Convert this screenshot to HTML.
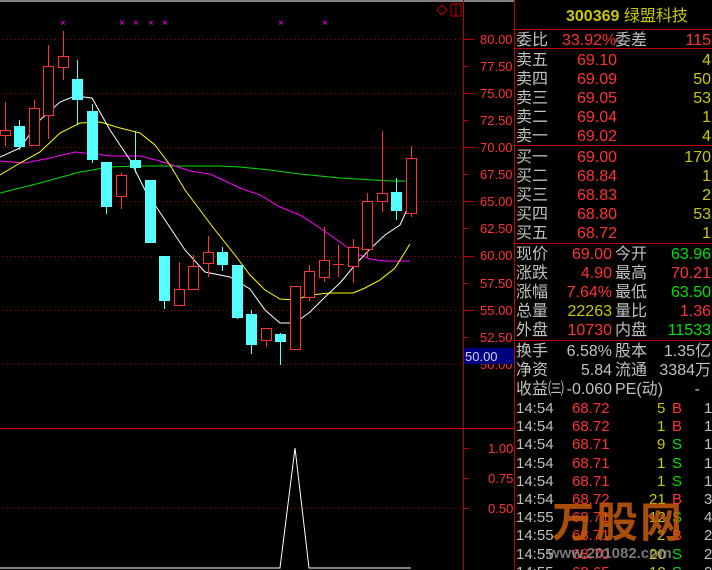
<!DOCTYPE html>
<html style="width:712px;height:570px;overflow:hidden"><head><meta charset="utf-8">
<style>
*{margin:0;padding:0;box-sizing:border-box}
html,body{width:712px;height:570px;overflow:hidden}
body{background:#000;position:relative;font-family:"Liberation Sans","Noto Sans CJK SC",sans-serif}
.t{position:absolute;white-space:nowrap;font-size:16px;line-height:19px}
.l{color:#c0c0c0;font-size:16px}
.r{color:#ff3232}.y{color:#c8c800}.g{color:#00e000}.w{color:#c0c0c0}
.hl{position:absolute;left:515px;width:197px;height:1px;background:#c00000}
</style></head><body>
<svg width="712" height="570" style="position:absolute;left:0;top:0" xmlns="http://www.w3.org/2000/svg">
<rect x="0" y="0" width="514" height="2" fill="#808080"/>
<g stroke="#a00000" stroke-dasharray="1,3" stroke-width="1">
<line x1="3" y1="39.5" x2="462" y2="39.5"/><line x1="3" y1="93.5" x2="462" y2="93.5"/>
<line x1="3" y1="147.5" x2="462" y2="147.5"/><line x1="3" y1="201.5" x2="462" y2="201.5"/>
<line x1="3" y1="256.5" x2="462" y2="256.5"/><line x1="3" y1="310.5" x2="462" y2="310.5"/>
<line x1="3" y1="364.5" x2="462" y2="364.5"/><line x1="3" y1="508.5" x2="462" y2="508.5"/>
</g>
<line x1="463.5" y1="0" x2="463.5" y2="570" stroke="#c00000"/>
<line x1="514.5" y1="0" x2="514.5" y2="570" stroke="#c00000"/>
<line x1="0" y1="428.5" x2="514" y2="428.5" stroke="#c00000" stroke-width="1.2"/>
<g stroke="#c00000">
<line x1="463" y1="39.5" x2="474" y2="39.5"/><line x1="463" y1="66.5" x2="468" y2="66.5"/>
<line x1="463" y1="93.5" x2="474" y2="93.5"/><line x1="463" y1="120.5" x2="468" y2="120.5"/>
<line x1="463" y1="147.5" x2="474" y2="147.5"/><line x1="463" y1="174.5" x2="468" y2="174.5"/>
<line x1="463" y1="201.5" x2="474" y2="201.5"/><line x1="463" y1="228.5" x2="468" y2="228.5"/>
<line x1="463" y1="256.5" x2="474" y2="256.5"/><line x1="463" y1="283.5" x2="468" y2="283.5"/>
<line x1="463" y1="310.5" x2="474" y2="310.5"/><line x1="463" y1="337.5" x2="468" y2="337.5"/>
<line x1="463" y1="448.5" x2="469" y2="448.5"/><line x1="463" y1="478.5" x2="469" y2="478.5"/>
<line x1="463" y1="508.5" x2="469" y2="508.5"/>
</g>
<g fill="#ff3232" font-family="Liberation Sans" font-size="13">
<text x="480" y="44">80.00</text><text x="480" y="71">77.50</text><text x="480" y="98">75.00</text>
<text x="480" y="125">72.50</text><text x="480" y="152">70.00</text><text x="480" y="179">67.50</text>
<text x="480" y="206">65.00</text><text x="480" y="233">62.50</text><text x="480" y="260">60.00</text>
<text x="480" y="288">57.50</text><text x="480" y="315">55.00</text><text x="480" y="342">52.50</text>
<text x="480" y="369">50.00</text>
<text x="488" y="453">1.00</text><text x="488" y="483">0.75</text><text x="488" y="513">0.50</text>
</g>
<rect x="464" y="348" width="50" height="16" fill="#000080"/>
<text x="465" y="361" fill="#d0d0ff" font-family="Liberation Sans" font-size="13">50.00</text>
<path d="M442 5 L447 10 L442 15 L437 10 Z" fill="none" stroke="#c00000"/>
<rect x="451" y="4" width="10" height="12" fill="none" stroke="#c00000"/><line x1="456" y1="4" x2="456" y2="16" stroke="#c00000"/>
<g fill="none" stroke-width="1">
<polyline stroke="#00e000" points="0,193 40,183 80,172 110,167 140,166 220,166 240,167 270,170 300,174 340,178 390,181 410,181"/>
<polyline stroke="#ff00ff" points="0,161 25,163 50,158 75,152 95,154 110,156 140,156 160,161 190,171 210,174 240,188 260,195 280,207 300,215 320,228 340,242 355,253 370,259 385,261 410,261"/>
<polyline stroke="#ffff00" points="0,175 20,163 40,152 60,133 80,123 100,122 120,128 140,133 155,145 170,165 185,190 200,210 215,230 235,255 250,275 265,290 280,299 295,300 310,295 330,293 353,293 365,288 380,280 395,268 410,244"/>
<polyline stroke="#ffffff" points="0,157 20,148 40,120 60,102 75,96 92,98 110,130 130,160 145,190 165,220 185,250 205,272 230,277 250,289 265,310 280,323 295,323 310,312 325,297 340,283 355,265 370,249 385,235 400,225 410,203"/>
<polyline stroke="#ffffff" points="0,568 280,568 295,448 309,568 411,568"/>
</g>
<g fill="#ff00ff" font-family="Liberation Sans" font-size="10">
<text x="60" y="26">×</text><text x="119" y="26">×</text><text x="133" y="26">×</text><text x="148" y="26">×</text><text x="162" y="26">×</text><text x="278" y="26">×</text><text x="322" y="26">×</text>
</g>
<g>
<line x1="5.5" y1="102" x2="5.5" y2="146" stroke="#ff3232"/><rect x="0.5" y="130.5" width="10" height="5" fill="#000" stroke="#ff3232"/>
<line x1="19.5" y1="120" x2="19.5" y2="150" stroke="#55ffff"/><rect x="14" y="126" width="11" height="21" fill="#55ffff"/>
<line x1="34.5" y1="100" x2="34.5" y2="108" stroke="#ff3232"/><rect x="29.5" y="108.5" width="10" height="37" fill="#000" stroke="#ff3232"/>
<line x1="48.5" y1="45" x2="48.5" y2="139" stroke="#ff3232"/><rect x="43.5" y="66.5" width="10" height="49" fill="#000" stroke="#ff3232"/>
<line x1="63.5" y1="31" x2="63.5" y2="80" stroke="#ff3232"/><rect x="58.5" y="56.5" width="10" height="11" fill="#000" stroke="#ff3232"/>
<line x1="77.5" y1="60" x2="77.5" y2="125" stroke="#55ffff"/><rect x="72" y="79" width="11" height="21" fill="#55ffff"/>
<line x1="92.5" y1="104" x2="92.5" y2="163" stroke="#55ffff"/><rect x="87" y="111" width="11" height="49" fill="#55ffff"/>
<line x1="106.5" y1="162" x2="106.5" y2="214" stroke="#55ffff"/><rect x="101" y="162" width="11" height="45" fill="#55ffff"/>
<line x1="121.5" y1="173" x2="121.5" y2="209" stroke="#ff3232"/><rect x="116.5" y="175.5" width="10" height="21" fill="#000" stroke="#ff3232"/>
<line x1="135.5" y1="131" x2="135.5" y2="173" stroke="#55ffff"/><rect x="130" y="160" width="11" height="8" fill="#55ffff"/>
<rect x="145" y="180" width="11" height="63" fill="#55ffff"/>
<line x1="164.5" y1="256" x2="164.5" y2="309" stroke="#55ffff"/><rect x="159" y="256" width="11" height="45" fill="#55ffff"/>
<line x1="179.5" y1="262" x2="179.5" y2="305" stroke="#ff3232"/><rect x="174.5" y="289.5" width="10" height="16" fill="#000" stroke="#ff3232"/>
<line x1="193.5" y1="255" x2="193.5" y2="266" stroke="#ff3232"/><rect x="188.5" y="266.5" width="10" height="23" fill="#000" stroke="#ff3232"/>
<line x1="208.5" y1="236" x2="208.5" y2="277" stroke="#ff3232"/><rect x="203.5" y="252.5" width="10" height="11" fill="#000" stroke="#ff3232"/>
<line x1="222.5" y1="247" x2="222.5" y2="271" stroke="#55ffff"/><rect x="217" y="252" width="11" height="13" fill="#55ffff"/>
<line x1="237.5" y1="265" x2="237.5" y2="319" stroke="#55ffff"/><rect x="232" y="265" width="11" height="53" fill="#55ffff"/>
<line x1="251.5" y1="310" x2="251.5" y2="354" stroke="#55ffff"/><rect x="246" y="314" width="11" height="31" fill="#55ffff"/>
<line x1="266.5" y1="328" x2="266.5" y2="347" stroke="#ff3232"/><rect x="261.5" y="328.5" width="10" height="12" fill="#000" stroke="#ff3232"/>
<line x1="280.5" y1="333" x2="280.5" y2="365" stroke="#55ffff"/><rect x="275" y="334" width="11" height="8" fill="#55ffff"/>
<rect x="290.5" y="286.5" width="10" height="63" fill="#000" stroke="#ff3232"/>
<line x1="309.5" y1="265" x2="309.5" y2="301" stroke="#ff3232"/><rect x="304.5" y="271.5" width="10" height="26" fill="#000" stroke="#ff3232"/>
<line x1="324.5" y1="227" x2="324.5" y2="282" stroke="#ff3232"/><rect x="319.5" y="260.5" width="10" height="17" fill="#000" stroke="#ff3232"/>
<line x1="338.5" y1="245" x2="338.5" y2="277" stroke="#ff3232"/><line x1="333" y1="264.5" x2="344" y2="264.5" stroke="#ff3232"/>
<line x1="353.5" y1="239" x2="353.5" y2="283" stroke="#ff3232"/><rect x="348.5" y="247.5" width="10" height="19" fill="#000" stroke="#ff3232"/>
<line x1="367.5" y1="193" x2="367.5" y2="258" stroke="#ff3232"/><rect x="362.5" y="201.5" width="10" height="48" fill="#000" stroke="#ff3232"/>
<line x1="382.5" y1="131" x2="382.5" y2="212" stroke="#ff3232"/><rect x="377.5" y="193.5" width="10" height="8" fill="#000" stroke="#ff3232"/>
<line x1="396.5" y1="178" x2="396.5" y2="220" stroke="#55ffff"/><rect x="391" y="192" width="11" height="19" fill="#55ffff"/>
<line x1="411.5" y1="146" x2="411.5" y2="217" stroke="#ff3232"/><rect x="406.5" y="158.5" width="10" height="55" fill="#000" stroke="#ff3232"/>
</g>
</svg>

<div class="hl" style="top:29px"></div>
<div class="hl" style="top:48px"></div>
<div class="hl" style="top:145px"></div>
<div class="hl" style="top:243px"></div>
<div class="hl" style="top:340px"></div>

<div class="t y" style="left:566px;top:7px;font-size:16px;font-weight:bold">300369 <span style="font-weight:normal">绿盟科技</span></div>

<div class="t l" style="left:516px;top:31px">委比</div><div class="t r" style="left:562px;top:31px">33.92%</div><div class="t l" style="left:615px;top:31px">委差</div><div class="t r" style="right:1px;top:31px">115</div>

<div class="t l" style="left:516px;top:51px">卖五</div><div class="t r" style="left:577px;top:51px">69.10</div><div class="t y" style="right:1px;top:51px">4</div>
<div class="t l" style="left:516px;top:70px">卖四</div><div class="t r" style="left:577px;top:70px">69.09</div><div class="t y" style="right:1px;top:70px">50</div>
<div class="t l" style="left:516px;top:89px">卖三</div><div class="t r" style="left:577px;top:89px">69.05</div><div class="t y" style="right:1px;top:89px">53</div>
<div class="t l" style="left:516px;top:108px">卖二</div><div class="t r" style="left:577px;top:108px">69.04</div><div class="t y" style="right:1px;top:108px">1</div>
<div class="t l" style="left:516px;top:127px">卖一</div><div class="t r" style="left:577px;top:127px">69.02</div><div class="t y" style="right:1px;top:127px">4</div>

<div class="t l" style="left:516px;top:148px">买一</div><div class="t r" style="left:577px;top:148px">69.00</div><div class="t y" style="right:1px;top:148px">170</div>
<div class="t l" style="left:516px;top:167px">买二</div><div class="t r" style="left:577px;top:167px">68.84</div><div class="t y" style="right:1px;top:167px">1</div>
<div class="t l" style="left:516px;top:186px">买三</div><div class="t r" style="left:577px;top:186px">68.83</div><div class="t y" style="right:1px;top:186px">2</div>
<div class="t l" style="left:516px;top:205px">买四</div><div class="t r" style="left:577px;top:205px">68.80</div><div class="t y" style="right:1px;top:205px">53</div>
<div class="t l" style="left:516px;top:224px">买五</div><div class="t r" style="left:577px;top:224px">68.72</div><div class="t y" style="right:1px;top:224px">1</div>

<div class="t l" style="left:516px;top:245px">现价</div><div class="t r" style="right:100px;top:245px">69.00</div><div class="t l" style="left:615px;top:245px">今开</div><div class="t g" style="right:1px;top:245px">63.96</div>
<div class="t l" style="left:516px;top:264px">涨跌</div><div class="t r" style="right:100px;top:264px">4.90</div><div class="t l" style="left:615px;top:264px">最高</div><div class="t r" style="right:1px;top:264px">70.21</div>
<div class="t l" style="left:516px;top:283px">涨幅</div><div class="t r" style="right:100px;top:283px">7.64%</div><div class="t l" style="left:615px;top:283px">最低</div><div class="t g" style="right:1px;top:283px">63.50</div>
<div class="t l" style="left:516px;top:302px">总量</div><div class="t y" style="right:100px;top:302px">22263</div><div class="t l" style="left:615px;top:302px">量比</div><div class="t r" style="right:1px;top:302px">1.36</div>
<div class="t l" style="left:516px;top:321px">外盘</div><div class="t r" style="right:100px;top:321px">10730</div><div class="t l" style="left:615px;top:321px">内盘</div><div class="t g" style="right:1px;top:321px">11533</div>

<div class="t l" style="left:516px;top:342px">换手</div><div class="t w" style="right:100px;top:342px">6.58%</div><div class="t l" style="left:615px;top:342px">股本</div><div class="t w" style="right:1px;top:342px">1.35亿</div>
<div class="t l" style="left:516px;top:361px">净资</div><div class="t w" style="right:100px;top:361px">5.84</div><div class="t l" style="left:615px;top:361px">流通</div><div class="t w" style="right:1px;top:361px">3384万</div>
<div class="t l" style="left:516px;top:380px">收益㈢</div><div class="t w" style="right:100px;top:380px">-0.060</div><div class="t l" style="left:615px;top:380px">PE(动)</div><div class="t w" style="right:12px;top:380px">-</div>

<div style="position:absolute;left:516px;top:400px;height:170px;overflow:hidden;width:196px;font-size:15px;line-height:18.2px;font-family:'Liberation Sans',sans-serif">
<div style="position:relative;height:18.2px"><span class="w" style="position:absolute;left:0">14:54</span><span class="r" style="position:absolute;left:56px">68.72</span><span class="y" style="position:absolute;left:141px">5</span><span class="r" style="position:absolute;left:156px">B</span><span class="w" style="position:absolute;left:188px">1</span></div>
<div style="position:relative;height:18.2px"><span class="w" style="position:absolute;left:0">14:54</span><span class="r" style="position:absolute;left:56px">68.72</span><span class="y" style="position:absolute;left:141px">1</span><span class="r" style="position:absolute;left:156px">B</span><span class="w" style="position:absolute;left:188px">1</span></div>
<div style="position:relative;height:18.2px"><span class="w" style="position:absolute;left:0">14:54</span><span class="r" style="position:absolute;left:56px">68.71</span><span class="y" style="position:absolute;left:141px">9</span><span class="g" style="position:absolute;left:156px">S</span><span class="w" style="position:absolute;left:188px">1</span></div>
<div style="position:relative;height:18.2px"><span class="w" style="position:absolute;left:0">14:54</span><span class="r" style="position:absolute;left:56px">68.71</span><span class="y" style="position:absolute;left:141px">1</span><span class="g" style="position:absolute;left:156px">S</span><span class="w" style="position:absolute;left:188px">1</span></div>
<div style="position:relative;height:18.2px"><span class="w" style="position:absolute;left:0">14:54</span><span class="r" style="position:absolute;left:56px">68.71</span><span class="y" style="position:absolute;left:141px">1</span><span class="g" style="position:absolute;left:156px">S</span><span class="w" style="position:absolute;left:188px">1</span></div>
<div style="position:relative;height:18.2px"><span class="w" style="position:absolute;left:0">14:54</span><span class="r" style="position:absolute;left:56px">68.72</span><span class="y" style="position:absolute;left:133px">21</span><span class="r" style="position:absolute;left:156px">B</span><span class="w" style="position:absolute;left:188px">3</span></div>
<div style="position:relative;height:18.2px"><span class="w" style="position:absolute;left:0">14:55</span><span class="r" style="position:absolute;left:56px">68.71</span><span class="y" style="position:absolute;left:133px">12</span><span class="g" style="position:absolute;left:156px">S</span><span class="w" style="position:absolute;left:188px">4</span></div>
<div style="position:relative;height:18.2px"><span class="w" style="position:absolute;left:0">14:55</span><span class="r" style="position:absolute;left:56px">68.71</span><span class="y" style="position:absolute;left:141px">2</span><span class="r" style="position:absolute;left:156px">B</span><span class="w" style="position:absolute;left:188px">2</span></div>
<div style="position:relative;height:18.2px"><span class="w" style="position:absolute;left:0">14:55</span><span class="r" style="position:absolute;left:56px">68.70</span><span class="y" style="position:absolute;left:133px">20</span><span class="g" style="position:absolute;left:156px">S</span><span class="w" style="position:absolute;left:188px">2</span></div>
<div style="position:relative;height:18.2px"><span class="w" style="position:absolute;left:0">14:55</span><span class="r" style="position:absolute;left:56px">68.65</span><span class="y" style="position:absolute;left:133px">10</span><span class="g" style="position:absolute;left:156px">S</span><span class="w" style="position:absolute;left:188px">2</span></div>
</div>
<div class="t" style="left:552px;top:500px;font-size:42px;line-height:46px;font-weight:bold;color:rgba(200,90,10,0.85);letter-spacing:2px">万股网</div>
<div class="t" style="left:548px;top:544px;font-size:15px;font-weight:bold;color:rgba(150,150,150,0.8)">www.201082.com</div>
</body></html>
